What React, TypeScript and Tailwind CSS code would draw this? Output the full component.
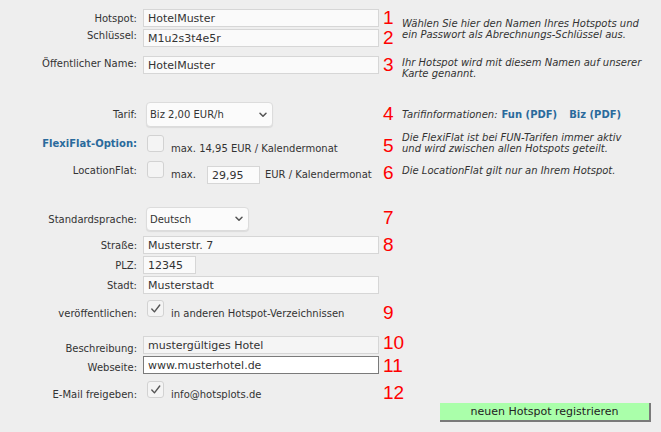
import React from "react";

const Label = ({
  children,
  className = "",
  color = "text-[#333]",
}: {
  children: React.ReactNode;
  className?: string;
  color?: string;
}) => (
  <div className={`w-[137px] shrink-0 text-right text-[10px] leading-[11px] ${color} ${className}`}>{children}</div>
);

const Num = ({ children, className = "" }: { children: React.ReactNode; className?: string }) => (
  <div
    className={`w-[19px] shrink-0 font-['Liberation_Sans',Arial,sans-serif] text-[19px] leading-none text-[#ff0000] ${className}`}
  >
    {children}
  </div>
);

const Desc = ({ children, className = "" }: { children: React.ReactNode; className?: string }) => (
  <div className={`flex-1 whitespace-nowrap text-[10px] italic leading-[11px] text-[#333] ${className}`}>{children}</div>
);

const TextInput = ({
  value,
  className = "",
  bg = "bg-[#fafafa]",
}: {
  value: string;
  className?: string;
  bg?: string;
}) => (
  <input
    readOnly
    defaultValue={value}
    className={`block h-[18px] border border-[#d6d6d6] ${bg} px-[4px] text-[11px] text-[#333] outline-none ${className}`}
  />
);

const Check = ({ checked = false }: { checked?: boolean }) => (
  <div className="flex h-[17px] w-[17px] shrink-0 items-center justify-center rounded-[3px] border border-[#d2d2d2] bg-[#f4f4f4]">
    {checked && (
      <svg width="17" height="17" viewBox="0 0 17 17" className="block">
        <path d="M4.3 9 L7.3 12.3 L13.3 4.5" fill="none" stroke="#555" strokeWidth="1.6" strokeLinecap="round" strokeLinejoin="round" />
      </svg>
    )}
  </div>
);

const Select = ({ value, className = "" }: { value: string; className?: string }) => (
  <div
    className={`flex items-center justify-between rounded-[4px] border border-[#dcdcdc] bg-[#fbfbfb] pl-[3px] pr-[5px] text-[10px] text-[#333] shadow-[0_1px_1px_rgba(0,0,0,0.08)] ${className}`}
  >
    <span>{value}</span>
    <svg width="8" height="6" viewBox="0 0 8 6" className="block">
      <path d="M1 1.2 L4 4.3 L7 1.2" fill="none" stroke="#555" strokeWidth="1.5" strokeLinecap="round" strokeLinejoin="round" />
    </svg>
  </div>
);

export default function App() {
  return (
    <div className="h-[432px] w-full overflow-hidden bg-[#eeeeee] font-['DejaVu_Sans',Verdana,sans-serif]">
      <div className="flex flex-col pt-[8px]">
        {/* Hotspot */}
        <div className="flex h-[20px] items-start">
          <Label className="mt-[5px]">Hotspot:</Label>
          <div className="ml-[6px] w-[240px] shrink-0 pt-[1px]">
            <TextInput value="HotelMuster" className="w-[236px]" />
          </div>
          <Num>1</Num>
          <Desc className="mt-[10px]">
            Wählen Sie hier den Namen Ihres Hotspots und
            <br />
            ein Passwort als Abrechnungs-Schlüssel aus.
          </Desc>
        </div>
        {/* Schlüssel */}
        <div className="flex h-[20px] items-start">
          <Label className="mt-[2px]">Schlüssel:</Label>
          <div className="ml-[6px] w-[240px] shrink-0 pt-[1px]">
            <TextInput value="M1u2s3t4e5r" className="w-[236px]" />
          </div>
          <Num>2</Num>
        </div>
        {/* Öffentlicher Name */}
        <div className="mt-[7px] flex h-[20px] items-start">
          <Label className="mt-[3px]">Öffentlicher Name:</Label>
          <div className="ml-[6px] w-[240px] shrink-0 pt-[1px]">
            <TextInput value="HotelMuster" className="w-[236px]" />
          </div>
          <Num>3</Num>
          <Desc className="mt-[2px]">
            Ihr Hotspot wird mit diesem Namen auf unserer
            <br />
            Karte genannt.
          </Desc>
        </div>
        {/* Tarif */}
        <div className="mt-[26px] flex h-[27px] items-start">
          <Label className="mt-[8px]">Tarif:</Label>
          <div className="ml-[6px] w-[240px] shrink-0 pl-[3px] pt-[1px]">
            <Select value="Biz 2,00 EUR/h" className="h-[25px] w-[127px]" />
          </div>
          <Num className="mt-[3px]">4</Num>
          <Desc className="mt-[8px]">
            Tarifinformationen:
            <span className="ml-[4px] font-bold not-italic text-[#2a6a9c]">Fun (PDF)</span>
            <span className="ml-[12px] font-bold not-italic text-[#2a6a9c]">Biz (PDF)</span>
          </Desc>
        </div>
        {/* FlexiFlat */}
        <div className="mt-[7px] flex h-[17px] items-start">
          <Label className="mt-[3px] font-bold" color="text-[#2a6a9c]">
            FlexiFlat-Option:
          </Label>
          <div className="ml-[6px] flex w-[240px] shrink-0 items-start pl-[4px]">
            <Check />
            <span className="ml-[7px] mt-[8px] text-[10px] leading-[11px] text-[#333]">max. 14,95 EUR / Kalendermonat</span>
          </div>
          <Num className="mt-[1px]">5</Num>
          <Desc className="-mt-[3px]">
            Die FlexiFlat ist bei FUN-Tarifen immer aktiv
            <br />
            und wird zwischen allen Hotspots geteilt.
          </Desc>
        </div>
        {/* LocationFlat */}
        <div className="mt-[9px] flex h-[17px] items-start">
          <Label className="mt-[4px]">LocationFlat:</Label>
          <div className="ml-[6px] flex w-[240px] shrink-0 items-start pl-[4px]">
            <Check />
            <span className="ml-[7px] mt-[8px] text-[10px] leading-[11px] text-[#333]">max.</span>
            <div className="ml-[11px] mt-[5px]">
              <TextInput value="29,95" className="w-[53px]" bg="bg-[#fbfbfb]" />
            </div>
            <span className="ml-[5px] mt-[8px] whitespace-nowrap text-[10px] leading-[11px] text-[#333]">
              EUR / Kalendermonat
            </span>
          </div>
          <Num className="mt-[2px]">6</Num>
          <Desc className="mt-[4px]">Die LocationFlat gilt nur an Ihrem Hotspot.</Desc>
        </div>
        {/* Standardsprache */}
        <div className="mt-[29px] flex h-[24px] items-start">
          <Label className="mt-[7px]">Standardsprache:</Label>
          <div className="ml-[6px] w-[240px] shrink-0 pl-[3px]">
            <Select value="Deutsch" className="h-[24px] w-[103px]" />
          </div>
          <Num className="mt-[1px]">7</Num>
        </div>
        {/* Straße */}
        <div className="mt-[5px] flex h-[18px] items-start">
          <Label className="mt-[4px]">Straße:</Label>
          <div className="ml-[6px] w-[240px] shrink-0">
            <TextInput value="Musterstr. 7" className="w-[236px]" />
          </div>
          <Num className="-mt-[1px]">8</Num>
        </div>
        {/* PLZ */}
        <div className="mt-[2px] flex h-[18px] items-start">
          <Label className="mt-[4px]">PLZ:</Label>
          <div className="ml-[6px] w-[240px] shrink-0">
            <TextInput value="12345" className="w-[53px]" />
          </div>
        </div>
        {/* Stadt */}
        <div className="mt-[2px] flex h-[18px] items-start">
          <Label className="mt-[4px]">Stadt:</Label>
          <div className="ml-[6px] w-[240px] shrink-0">
            <TextInput value="Musterstadt" className="w-[236px]" />
          </div>
        </div>
        {/* veröffentlichen */}
        <div className="mt-[6px] flex h-[17px] items-start">
          <Label className="mt-[8px]">veröffentlichen:</Label>
          <div className="ml-[6px] flex w-[240px] shrink-0 items-start pl-[4px]">
            <Check checked />
            <span className="ml-[7px] mt-[8px] whitespace-nowrap text-[10px] leading-[11px] text-[#333]">
              in anderen Hotspot-Verzeichnissen
            </span>
          </div>
          <Num className="mt-[3px]">9</Num>
        </div>
        {/* Beschreibung */}
        <div className="mt-[19px] flex h-[17px] items-start">
          <Label className="mt-[7px]">Beschreibung:</Label>
          <div className="ml-[6px] w-[240px] shrink-0">
            <TextInput value="mustergültiges Hotel" className="h-[17px] w-[236px]" bg="bg-[#f5f5f5]" />
          </div>
          <Num className="-mt-[3px]">10</Num>
        </div>
        {/* Webseite */}
        <div className="mt-[3px] flex h-[18px] items-start">
          <Label className="mt-[6px]">Webseite:</Label>
          <div className="ml-[6px] w-[240px] shrink-0">
            <input
              readOnly
              defaultValue="www.musterhotel.de"
              className="block h-[18px] w-[236px] border border-[#7a7a7a] bg-white px-[4px] text-[11px] text-[#333] outline-none"
            />
          </div>
          <Num>11</Num>
        </div>
        {/* E-Mail */}
        <div className="mt-[7px] flex h-[17px] items-start">
          <Label className="mt-[8px]">E-Mail freigeben:</Label>
          <div className="ml-[6px] flex w-[240px] shrink-0 items-start pl-[4px]">
            <Check checked />
            <span className="ml-[7px] mt-[8px] whitespace-nowrap text-[10px] leading-[11px] text-[#333]">
              info@hotsplots.de
            </span>
          </div>
          <Num className="mt-[2px]">12</Num>
        </div>
        {/* Button */}
        <div className="mt-[5px] flex">
          <button className="ml-[440px] h-[19px] w-[211px] border-b-2 border-r-2 border-[#7a7a7a] bg-[#aaffaa] text-[11px] leading-none text-[#222]">
            neuen Hotspot registrieren
          </button>
        </div>
      </div>
    </div>
  );
}
